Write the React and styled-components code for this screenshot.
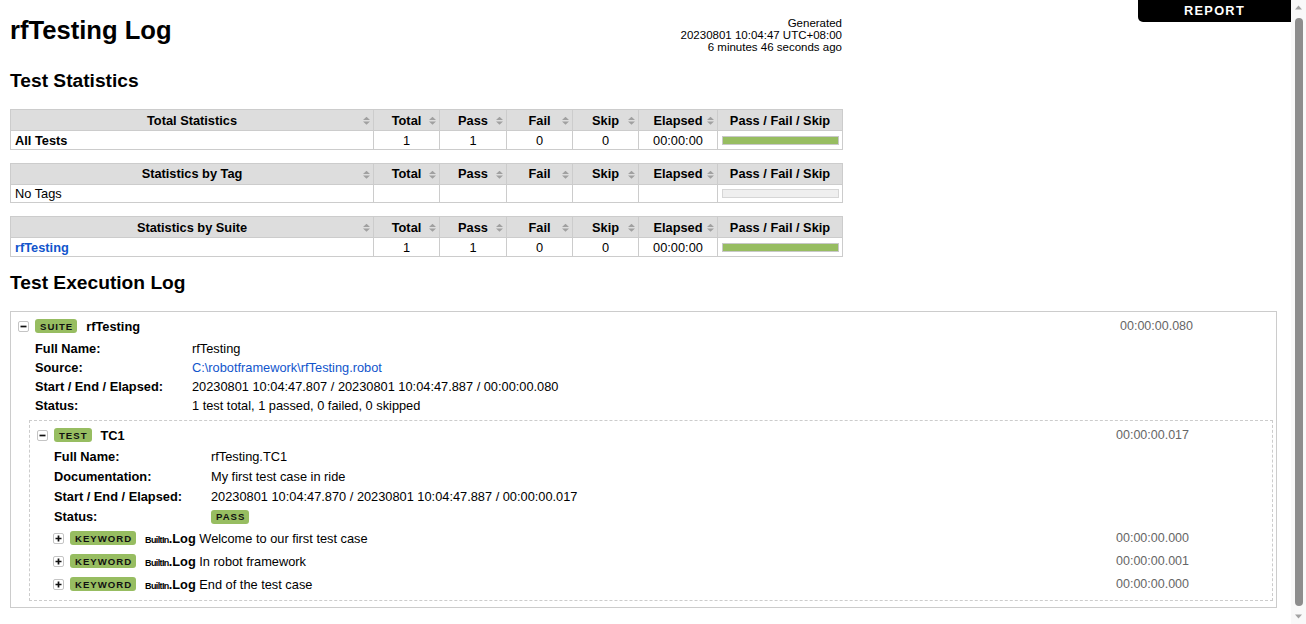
import React from 'react';
import styled, { createGlobalStyle } from 'styled-components';

const GlobalStyle = createGlobalStyle`
  body {
    margin: 0;
    padding: 10px 25px 20px 10px;
    background: #fff;
    color: #000;
    font-family: "Liberation Sans", Arial, Helvetica, sans-serif;
    font-size: 12.8px;
  }
`;

const ScrollTrack = styled.div`
  position: fixed;
  top: 0;
  right: 0;
  bottom: 0;
  width: 15px;
  background: #f9f9f9;
  display: flex;
  flex-direction: column;
  align-items: center;
`;

const ScrollArrow = styled.svg`
  flex: none;
  display: block;
`;

const ScrollThumb = styled.div`
  flex: 1;
  width: 8px;
  margin: 3px 0 3px;
  border-radius: 4px;
  background: #8d8d8d;
`;

const ReportLink = styled.a`
  position: fixed;
  top: 0;
  right: 15px;
  width: 153px;
  height: 22px;
  line-height: 22px;
  background: #000;
  color: #fff;
  font-weight: bold;
  letter-spacing: 0.1em;
  text-align: center;
  text-decoration: none;
  text-transform: uppercase;
  border-bottom-left-radius: 5px;
`;

const Header = styled.header`
  width: 832px;
  height: 40px;
  margin-top: 6px;
  display: flex;
  justify-content: space-between;
  align-items: flex-start;
`;

const Title = styled.h1`
  margin: 0;
  font-size: 25.6px;
  line-height: 29px;
  font-weight: bold;
`;

const Generated = styled.div`
  text-align: right;
  font-size: 11.5px;
  line-height: 12px;
  white-space: nowrap;
  padding-top: 1px;
`;

const SectionTitle = styled.h2`
  margin: ${(p) => p.$top}px 0 17px;
  font-size: 19.2px;
  line-height: 22px;
  font-weight: bold;
`;

const StatsTable = styled.table`
  width: 832px;
  border-collapse: collapse;
  table-layout: fixed;
  margin-bottom: 13px;
`;

const Col = styled.col`
  width: ${(p) => p.$w}px;
`;

const Th = styled.th`
  position: relative;
  background: #ddd;
  border: 1px solid #ccc;
  padding: 2.5px 4px;
  line-height: 15px;
  font-weight: bold;
  text-align: center;
  white-space: nowrap;
`;

const Td = styled.td`
  border: 1px solid #ccc;
  padding: 1.5px 4px 1px;
  line-height: 15px;
  text-align: ${(p) => (p.$left ? 'left' : 'center')};
  font-weight: ${(p) => (p.$bold ? 'bold' : 'normal')};
  vertical-align: middle;
  white-space: nowrap;
`;

const SortMark = styled.svg`
  position: absolute;
  right: 3px;
  top: 50%;
  transform: translateY(-40%);
`;

const Graph = styled.div`
  width: 115px;
  height: 7px;
  border: 1px solid ${(p) => (p.$pass ? '#c8c8c8' : '#d6d6d6')};
  background: ${(p) => (p.$pass ? '#97bd61' : '#efefef')};
`;

const StatLink = styled.a`
  color: #15c;
  font-weight: bold;
  text-decoration: none;
`;

const SuiteBox = styled.div`
  border: 1px solid #ccc;
  padding: 4px 3px 4px;
  margin-right: 4px;
`;

const TestBox = styled.div`
  border: 1px dashed #ccc;
  padding: 4px 3px;
  margin: 5px 0 2px 15px;
`;

const KeywordList = styled.div`
  margin-left: 16px;
`;

const ElementHeader = styled.div`
  display: flex;
  align-items: center;
  height: ${(p) => p.$h || 21}px;
  padding-left: 4px;
  white-space: nowrap;
`;

const Toggle = styled.span`
  box-sizing: border-box;
  width: 11px;
  height: 11px;
  border: 1px solid #c4c4c4;
  border-radius: 2px;
  background: #fff;
  display: inline-flex;
  align-items: center;
  justify-content: center;
  margin-right: 6px;
  flex: none;
`;

const Label = styled.span`
  display: inline-flex;
  align-items: center;
  height: 14px;
  padding: 0 4px 0 5px;
  border-radius: 3px;
  background: #97bd61;
  color: #111;
  font-size: 9.6px;
  font-weight: bold;
  letter-spacing: 1px;
  flex: none;
`;

const HeaderName = styled.span`
  margin-left: 9px;
  font-weight: bold;
`;

const KeywordTitle = styled.span`
  margin-left: 9px;
`;

const ParentName = styled.span`
  font-size: 9px;
  font-weight: bold;
  letter-spacing: -0.07em;
`;

const KwName = styled.span`
  font-weight: bold;
`;

const Elapsed = styled.span`
  margin-left: auto;
  margin-right: 80px;
  color: #666;
  font-size: 12.5px;
`;

const Metadata = styled.div`
  display: grid;
  grid-template-columns: 157px 1fr;
  grid-auto-rows: ${(p) => p.$row}px;
  align-items: center;
  margin: ${(p) => p.$top}px 0 0 21px;
`;

const MetaLabel = styled.div`
  font-weight: bold;
`;

const MetaValue = styled.div`
  display: flex;
  align-items: center;
`;

const ValueLink = styled.a`
  color: #15c;
  text-decoration: none;
`;

const SortIcon = () => (
  <SortMark width="7" height="9" viewBox="0 0 7 9" aria-hidden="true">
    <path d="M0 3.6 L3.5 0.3 L7 3.6Z M0 5 L7 5 L3.5 8.3Z" fill="#a0a0a0" />
  </SortMark>
);

const ToggleIcon = ({ open }) => (
  <Toggle>
    <svg width="7" height="7" viewBox="0 0 7 7" aria-hidden="true">
      <path d={open ? 'M0.5 3.5H6.5' : 'M0.5 3.5H6.5M3.5 0.5V6.5'} stroke="#111" strokeWidth="1.7" />
    </svg>
  </Toggle>
);

const Scrollbar = () => (
  <ScrollTrack aria-hidden="true">
    <ScrollArrow width="15" height="15" viewBox="0 0 15 15">
      <path d="M4 9.5 L7.5 5.5 L11 9.5Z" fill="#a3a3a3" />
    </ScrollArrow>
    <ScrollThumb />
    <ScrollArrow width="15" height="15" viewBox="0 0 15 15">
      <path d="M4 5.5 L11 5.5 L7.5 9.5Z" fill="#a3a3a3" />
    </ScrollArrow>
  </ScrollTrack>
);

const statCols = ['Total', 'Pass', 'Fail', 'Skip', 'Elapsed'];
const colWidths = [363, 66, 67, 66, 66, 79, 125];

const statsTables = [
  {
    title: 'Total Statistics',
    row: { name: 'All Tests', kind: 'bold', values: ['1', '1', '0', '0', '00:00:00'], pass: true },
  },
  {
    title: 'Statistics by Tag',
    row: { name: 'No Tags', kind: 'plain', values: ['', '', '', '', ''], pass: false },
  },
  {
    title: 'Statistics by Suite',
    row: { name: 'rfTesting', kind: 'link', values: ['1', '1', '0', '0', '00:00:00'], pass: true },
  },
];

const keywords = [
  { args: 'Welcome to our first test case', elapsed: '00:00:00.000' },
  { args: 'In robot framework', elapsed: '00:00:00.001' },
  { args: 'End of the test case', elapsed: '00:00:00.000' },
];

function StatTable({ title, row }) {
  return (
    <StatsTable>
      <colgroup>
        {colWidths.map((w, i) => (
          <Col key={i} $w={w} />
        ))}
      </colgroup>
      <thead>
        <tr>
          <Th>
            {title}
            <SortIcon />
          </Th>
          {statCols.map((c) => (
            <Th key={c}>
              {c}
              <SortIcon />
            </Th>
          ))}
          <Th>Pass / Fail / Skip</Th>
        </tr>
      </thead>
      <tbody>
        <tr>
          <Td $left $bold={row.kind === 'bold'}>
            {row.kind === 'link' ? <StatLink href="#s1">{row.name}</StatLink> : row.name}
          </Td>
          {row.values.map((v, i) => (
            <Td key={i}>{v}</Td>
          ))}
          <Td $left>
            <Graph $pass={row.pass} />
          </Td>
        </tr>
      </tbody>
    </StatsTable>
  );
}

export default function App() {
  return (
    <>
      <GlobalStyle />
      <ReportLink href="#report">Report</ReportLink>
      <Scrollbar />
      <Header>
        <Title>rfTesting Log</Title>
        <Generated>
          Generated
          <br />
          20230801 10:04:47 UTC+08:00
          <br />
          6 minutes 46 seconds ago
        </Generated>
      </Header>

      <SectionTitle $top={14}>Test Statistics</SectionTitle>
      {statsTables.map((t) => (
        <StatTable key={t.title} {...t} />
      ))}

      <SectionTitle $top={15}>Test Execution Log</SectionTitle>
      <SuiteBox>
        <ElementHeader>
          <ToggleIcon open />
          <Label>SUITE</Label>
          <HeaderName>rfTesting</HeaderName>
          <Elapsed>00:00:00.080</Elapsed>
        </ElementHeader>
        <Metadata $row={19} $top={2}>
          <MetaLabel>Full Name:</MetaLabel>
          <MetaValue>rfTesting</MetaValue>
          <MetaLabel>Source:</MetaLabel>
          <MetaValue>
            <ValueLink href="#source">C:\robotframework\rfTesting.robot</ValueLink>
          </MetaValue>
          <MetaLabel>Start / End / Elapsed:</MetaLabel>
          <MetaValue>20230801 10:04:47.807 / 20230801 10:04:47.887 / 00:00:00.080</MetaValue>
          <MetaLabel>Status:</MetaLabel>
          <MetaValue>1 test total, 1 passed, 0 failed, 0 skipped</MetaValue>
        </Metadata>

        <TestBox>
          <ElementHeader>
            <ToggleIcon open />
            <Label>TEST</Label>
            <HeaderName>TC1</HeaderName>
            <Elapsed>00:00:00.017</Elapsed>
          </ElementHeader>
          <Metadata $row={20} $top={1}>
            <MetaLabel>Full Name:</MetaLabel>
            <MetaValue>rfTesting.TC1</MetaValue>
            <MetaLabel>Documentation:</MetaLabel>
            <MetaValue>My first test case in ride</MetaValue>
            <MetaLabel>Start / End / Elapsed:</MetaLabel>
            <MetaValue>20230801 10:04:47.870 / 20230801 10:04:47.887 / 00:00:00.017</MetaValue>
            <MetaLabel>Status:</MetaLabel>
            <MetaValue>
              <Label>PASS</Label>
            </MetaValue>
          </Metadata>
          <KeywordList>
            {keywords.map((k, i) => (
              <ElementHeader key={i} $h={23}>
                <ToggleIcon />
                <Label>KEYWORD</Label>
                <KeywordTitle>
                  <ParentName>BuiltIn</ParentName>
                  <KwName>.Log</KwName> {k.args}
                </KeywordTitle>
                <Elapsed>{k.elapsed}</Elapsed>
              </ElementHeader>
            ))}
          </KeywordList>
        </TestBox>
      </SuiteBox>
    </>
  );
}
